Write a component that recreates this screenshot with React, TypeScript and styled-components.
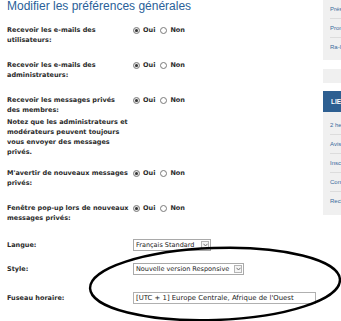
import styled, { createGlobalStyle } from "styled-components";

const GlobalStyle = createGlobalStyle`
  html, body {
    margin: 0;
    padding: 0;
    background: #ffffff;
  }
  body {
    font-family: "DejaVu Sans", Verdana, sans-serif;
    overflow: hidden;
  }
`;

const Radio = ({ checked }: { checked?: boolean }) => (
  <RadioDot $checked={checked} />
);

const YesNo = () => (
  <Choices>
    <Radio checked />
    <ChoiceText>Oui</ChoiceText>
    <Radio />
    <ChoiceText>Non</ChoiceText>
  </Choices>
);

const Chevron = () => (
  <svg width="5" height="4" viewBox="0 0 5 4">
    <path d="M0.5 0.8 L2.5 3 L4.5 0.8" fill="none" stroke="#666" strokeWidth="0.9" />
  </svg>
);

const SideLinksTop = ["Présentation", "Promotions", "Ra-lancement"];
const SideLinks = ["2 heures", "Avis", "Inscription", "Contact", "Recherche"];

export default function App() {
  return (
    <Page>
      <GlobalStyle />
      <Main>
        <Title>Modifier les préférences générales</Title>

        <Row $after={15}>
          <Label>Recevoir les e-mails des utilisateurs:</Label>
          <YesNo />
        </Row>
        <Row $after={15}>
          <Label>Recevoir les e-mails des administrateurs:</Label>
          <YesNo />
        </Row>
        <Row $after={11}>
          <Label>
            Recevoir les messages privés
            <br />
            des membres:
            <Note>
              Notez que les administrateurs et modérateurs peuvent toujours vous
              envoyer des messages privés.
            </Note>
          </Label>
          <YesNo />
        </Row>
        <Row $after={15}>
          <Label>M'avertir de nouveaux messages privés:</Label>
          <YesNo />
        </Row>
        <Row $after={16}>
          <Label>Fenêtre pop-up lors de nouveaux messages privés:</Label>
          <YesNo />
        </Row>

        <FieldRow $after={12}>
          <Label>Langue:</Label>
          <SelectBox $width={78}>
            <SelectValue>Français Standard</SelectValue>
            <ArrowBox>
              <Chevron />
            </ArrowBox>
          </SelectBox>
        </FieldRow>
        <FieldRow $after={17}>
          <Label>Style:</Label>
          <SelectBox $width={111}>
            <SelectValue>Nouvelle version Responsive</SelectValue>
            <ArrowBox>
              <Chevron />
            </ArrowBox>
          </SelectBox>
        </FieldRow>
        <FieldRow $after={0}>
          <Label>Fuseau horaire:</Label>
          <TextBox $width={183}>[UTC + 1] Europe Centrale, Afrique de l'Ouest</TextBox>
        </FieldRow>
      </Main>

      <Sidebar>
        <SidePanel>
          {SideLinksTop.map((l) => (
            <SideItem key={l}>{l}</SideItem>
          ))}
        </SidePanel>
        <SideBar />
        <SideHeader>LIENS</SideHeader>
        <SidePanel $flat>
          {SideLinks.map((l) => (
            <SideItem key={l}>{l}</SideItem>
          ))}
        </SidePanel>
      </Sidebar>

      <Annotation width="341" height="321" viewBox="0 0 341 321">
        <ellipse
          cx="215"
          cy="284"
          rx="125"
          ry="36"
          transform="rotate(-2 215 284)"
          fill="none"
          stroke="#000"
          strokeWidth="2.4"
        />
      </Annotation>
    </Page>
  );
}

const Page = styled.div`
  position: relative;
  display: flex;
  width: 341px;
  height: 321px;
  overflow: hidden;
`;

const Main = styled.div`
  flex: 0 0 308px;
  padding-left: 7px;
  color: #2b2b2b;
`;

const Title = styled.h1`
  margin: -1px 0 12px;
  font-family: "Liberation Sans", Arial, sans-serif;
  font-weight: 400;
  font-size: 12px;
  line-height: 14px;
  color: #2a5f99;
  white-space: nowrap;
`;

const Row = styled.div<{ $after: number }>`
  display: flex;
  align-items: flex-start;
  margin-bottom: ${(p) => p.$after}px;
`;

const FieldRow = styled(Row)`
  align-items: center;
  height: 12px;
`;

const Label = styled.div`
  flex: 0 0 124px;
  margin-right: 2px;
  font-size: 6.5px;
  font-weight: 700;
  line-height: 10px;
  color: #2b2b2b;
`;

const Note = styled.div`
  margin-top: 2px;
`;

const Choices = styled.div`
  display: flex;
  align-items: center;
  height: 10px;
`;

const RadioDot = styled.span<{ $checked?: boolean }>`
  position: relative;
  box-sizing: border-box;
  width: 7px;
  height: 7px;
  border-radius: 50%;
  border: 1px solid #7a7a7a;
  background: ${(p) => (p.$checked ? "#e4e4e4" : "#ffffff")};
  margin-right: 3px;
  &::after {
    content: "";
    display: ${(p) => (p.$checked ? "block" : "none")};
    position: absolute;
    left: 1px;
    top: 1px;
    width: 3px;
    height: 3px;
    border-radius: 50%;
    background: #333;
  }
`;

const ChoiceText = styled.span`
  font-size: 6.5px;
  font-weight: 700;
  line-height: 10px;
  margin-right: 5px;
  color: #2b2b2b;
`;

const SelectBox = styled.div<{ $width: number }>`
  box-sizing: border-box;
  display: flex;
  align-items: center;
  justify-content: space-between;
  width: ${(p) => p.$width}px;
  height: 12px;
  border: 1px solid #a9a9a9;
  background: #fff;
  padding: 0 1px 0 2px;
`;

const SelectValue = styled.span`
  font-size: 6.5px;
  line-height: 10px;
  color: #222;
  white-space: nowrap;
`;

const ArrowBox = styled.span`
  box-sizing: border-box;
  display: flex;
  align-items: center;
  justify-content: center;
  width: 8px;
  height: 8px;
  border: 1px solid #b5b5b5;
  background: #f4f4f4;
`;

const TextBox = styled.div<{ $width: number }>`
  box-sizing: border-box;
  width: ${(p) => p.$width}px;
  height: 12px;
  border: 1px solid #b0b0b0;
  padding: 0 2px;
  font-size: 6.9px;
  line-height: 10px;
  color: #222;
  white-space: nowrap;
  overflow: hidden;
`;

const Sidebar = styled.div`
  flex: 0 0 120px;
  margin-left: 7px;
  font-family: "Liberation Sans", Arial, sans-serif;
`;

const SidePanel = styled.div<{ $flat?: boolean }>`
  background: #f0f0f0;
  padding: ${(p) => (p.$flat ? "4px 0 5px 7px" : "0 0 4px 7px")};
`;

const SideItem = styled.div`
  height: 18px;
  line-height: 18px;
  font-size: 6px;
  color: #3a6a9c;
  border-bottom: 1px solid #dcdcdc;
  white-space: nowrap;
  &:last-child {
    border-bottom: none;
  }
`;

const SideBar = styled.div`
  height: 14px;
  margin: 9px 0 8px;
  background: #f0f0f0;
`;

const SideHeader = styled.div`
  height: 21px;
  line-height: 21px;
  padding-left: 8px;
  background: #2e5f91;
  color: #ffffff;
  font-size: 6.5px;
  font-weight: 700;
`;

const Annotation = styled.svg`
  position: absolute;
  left: 0;
  top: 0;
  pointer-events: none;
`;
